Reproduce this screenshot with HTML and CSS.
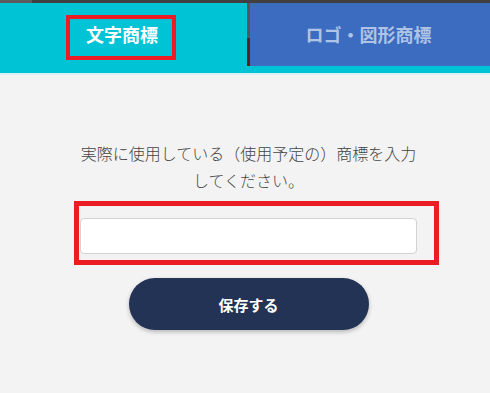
FILE: index.html
```html
<!DOCTYPE html>
<html>
<head>
    <title>商標入力</title>
    <link rel="stylesheet" href="styles.css">
</head>
<body>
    <div class="topbar"></div>

    <div class="tabs">
        <div class="tab tab-text">文字商標</div>
        <div class="tab tab-logo">ロゴ・図形商標</div>
    </div>
    <div class="tab-line"></div>

    <div class="content">
        <p class="lead">実際に使用している（使用予定の）商標を入力してください。</p>
        <input type="text" class="name-input">
        <button class="save-button">保存する</button>
    </div>

    <!-- 注釈の赤枠 -->
    <div class="mark mark-tab"></div>
    <div class="mark mark-input"></div>
</body>
</html>
```

FILE: styles.css
```css
/* ページ全体 */
body {
    margin: 0;
    background-color: #f3f3f3;
    font-family: "Noto Sans CJK JP", "Noto Sans", sans-serif;
    position: relative;
    height: 393px;
    overflow: hidden;
}

.topbar {
    height: 3px;
    background: linear-gradient(to right, #5c5c5c 32px, #404040 32px);
}

.tabs {
    display: flex;
    height: 63px;
    gap: 3px;
    background: linear-gradient(to bottom, #565656 35px, #5a1e1e 35px);
}

.tab {
    display: flex;
    align-items: center;
    justify-content: center;
    font-size: 18px;
    font-weight: bold;
    padding-bottom: 2px;
    padding-right: 3px;
    box-sizing: border-box;
}

.tab-text {
    width: 247px;
    background-color: #00c4d6;
    color: #ffffff;
}

.tab-logo {
    flex: 1;
    background-color: #3c6cbf;
    color: #afc3e6;
}

.tab-line {
    height: 7px;
    background-color: #00c4d6;
    border-bottom: 2px solid #dcf0f2;
}

.content {
    padding: 65px 73px 0 80px;
    display: flex;
    flex-direction: column;
    align-items: center;
}

.lead {
    margin: 0;
    font-size: 16px;
    font-weight: 300;
    line-height: 27px;
    color: #444444;
    text-align: center;
}

.name-input {
    margin-top: 24px;
    width: 100%;
    height: 36px;
    box-sizing: border-box;
    border: 1px solid #d2d2d2;
    border-radius: 4px;
    background-color: #ffffff;
}

.save-button {
    margin-top: 24px;
    width: 240px;
    height: 52px;
    border: none;
    border-radius: 26px;
    background-color: #223356;
    color: #ffffff;
    font-family: inherit;
    font-size: 15px;
    font-weight: bold;
    box-shadow: 0 2px 4px rgba(0, 0, 0, 0.25);
}

/* 赤枠 */
.mark {
    position: absolute;
    border: 4px solid #ec1c24;
    box-sizing: border-box;
}

.mark-tab {
    left: 66px;
    top: 15px;
    width: 110px;
    height: 45px;
}

.mark-input {
    left: 74px;
    top: 201px;
    width: 365px;
    height: 64px;
    border-width: 5px;
}
```
